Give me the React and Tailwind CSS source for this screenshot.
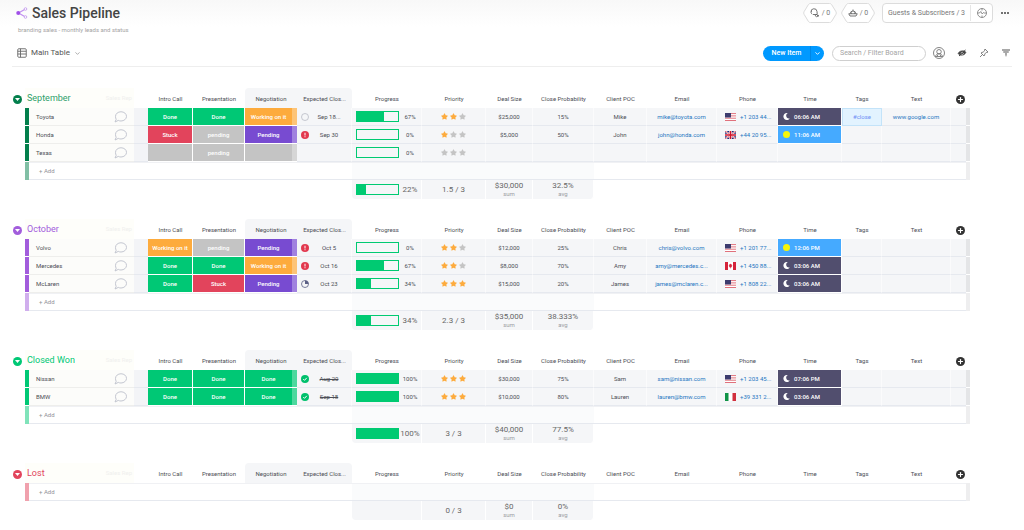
import { FaStar, FaMoon } from "react-icons/fa";
import { ChevronDown, Plus } from "lucide-react";

const statusColors = {
  Done: "bg-[#00c875]",
  Stuck: "bg-[#e2445c]",
  pending: "bg-[#c4c4c4]",
  "": "bg-[#c4c4c4]",
  "Working on it": "bg-[#fdab3d]",
  Pending: "bg-[#784bd1]",
};

const columns = [
  "Intro Call",
  "Presentation",
  "Negotiation",
  "Expected Clos...",
  "Progress",
  "Priority",
  "Deal Size",
  "Close Probability",
  "Client POC",
  "Email",
  "Phone",
  "Time",
  "Tags",
  "Text",
];

const groups = [
  {
    id: "september",
    title: "September",
    text: "text-[#2f9f6a]",
    bar: "bg-[#037f4c]",
    light: "bg-[#81bfa5]",
    items: [
      {
        name: "Toyota",
        stages: ["Done", "Done", "Working on it"],
        date: "Sep 18...",
        dateIcon: "empty",
        progress: 67,
        stars: 2,
        deal: "$25,000",
        probability: "15%",
        client: "Mike",
        email: "mike@toyota.com",
        flag: "us",
        phone: "+1 203 44...",
        time: "06:06 AM",
        tag: "#close",
        link: "www.google.com",
      },
      {
        name: "Honda",
        stages: ["Stuck", "pending", "Pending"],
        date: "Sep 30",
        dateIcon: "late",
        progress: 0,
        stars: 1,
        deal: "$5,000",
        probability: "50%",
        client: "John",
        email: "john@honda.com",
        flag: "uk",
        phone: "+44 20 95...",
        time: "11:06 AM",
        day: true,
      },
      { name: "Texas", stages: ["", "pending", ""], progress: 0, stars: 0 },
    ],
    summary: { progress: 22, priority: "1.5 / 3", deal: "$30,000", probability: "32.5%" },
  },
  {
    id: "october",
    title: "October",
    text: "text-[#a25ddc]",
    bar: "bg-[#a25ddc]",
    light: "bg-[#d0aeed]",
    items: [
      {
        name: "Volvo",
        stages: ["Working on it", "pending", "Pending"],
        date: "Oct 5",
        dateIcon: "late",
        progress: 0,
        stars: 2,
        deal: "$12,000",
        probability: "25%",
        client: "Chris",
        email: "chris@volvo.com",
        flag: "us",
        phone: "+1 201 77...",
        time: "12:06 PM",
        day: true,
      },
      {
        name: "Mercedes",
        stages: ["Done", "Done", "Working on it"],
        date: "Oct 16",
        dateIcon: "late",
        progress: 67,
        stars: 2,
        deal: "$8,000",
        probability: "70%",
        client: "Amy",
        email: "amy@mercedes.c...",
        flag: "ca",
        phone: "+1 450 88...",
        time: "03:06 AM",
      },
      {
        name: "McLaren",
        stages: ["Done", "Stuck", "Pending"],
        date: "Oct 23",
        dateIcon: "clock",
        progress: 34,
        stars: 3,
        deal: "$15,000",
        probability: "20%",
        client: "James",
        email: "james@mclaren.c...",
        flag: "us",
        phone: "+1 808 22...",
        time: "03:06 AM",
      },
    ],
    summary: { progress: 34, priority: "2.3 / 3", deal: "$35,000", probability: "38.333%" },
  },
  {
    id: "closed-won",
    title: "Closed Won",
    text: "text-[#00c875]",
    bar: "bg-[#00c875]",
    light: "bg-[#80e3ba]",
    items: [
      {
        name: "Nissan",
        stages: ["Done", "Done", "Done"],
        date: "Aug 20",
        dateIcon: "done",
        progress: 100,
        stars: 3,
        deal: "$30,000",
        probability: "75%",
        client: "Sam",
        email: "sam@nissan.com",
        flag: "us",
        phone: "+1 203 45...",
        time: "07:06 PM",
      },
      {
        name: "BMW",
        stages: ["Done", "Done", "Done"],
        date: "Sep 18",
        dateIcon: "done",
        progress: 100,
        stars: 3,
        deal: "$10,000",
        probability: "80%",
        client: "Lauren",
        email: "lauren@bmw.com",
        flag: "it",
        phone: "+39 331 2...",
        time: "03:06 AM",
      },
    ],
    summary: { progress: 100, priority: "3 / 3", deal: "$40,000", probability: "77.5%" },
  },
  {
    id: "lost",
    title: "Lost",
    text: "text-[#e2445c]",
    bar: "bg-[#e2445c]",
    light: "bg-[#f0a1ad]",
    items: [],
    summary: { progress: null, priority: "0 / 3", deal: "$0", probability: "0%" },
  },
];

function Flag({ country }) {
  return (
    <svg viewBox="0 0 22 16" className="h-2 w-[11px] shrink-0" aria-hidden="true">
      {country === "us" && (
        <>
          <rect width="22" height="16" fill="#fff" />
          <path d="M0 1.2h22M0 5.8h22M0 10.4h22M0 15h22" stroke="#e0717c" strokeWidth="2" />
          <rect width="12" height="9" fill="#3c3b6e" />
        </>
      )}
      {country === "uk" && (
        <>
          <rect width="22" height="16" fill="#1d2f7c" />
          <path d="M0 0l22 16M22 0L0 16" stroke="#fff" strokeWidth="3.6" />
          <path d="M0 0l22 16M22 0L0 16" stroke="#cf142b" strokeWidth="1.4" />
          <path d="M11 0v16M0 8h22" stroke="#fff" strokeWidth="5.4" />
          <path d="M11 0v16M0 8h22" stroke="#cf142b" strokeWidth="3.2" />
        </>
      )}
      {country === "ca" && (
        <>
          <rect width="22" height="16" fill="#fff" />
          <path d="M0 0h6v16H0zM16 0h6v16h-6z" fill="#d5233a" />
          <path d="M11 3l1.2 2 1.6-.6-.4 2.4 1.6.6-2.4 2.4.2 1.4-1.4-.2V13h-.8v-2l-1.4.2.2-1.4L7 7.400l1.600-.6-.4-2.400 1.600.6z" fill="#d5233a" />
        </>
      )}
      {country === "it" && (
        <>
          <rect width="22" height="16" fill="#fff" />
          <rect width="7" height="16" fill="#109347" />
          <rect x="15" width="7" height="16" fill="#d12f3d" />
        </>
      )}
    </svg>
  );
}

function DateIcon({ type }) {
  return (
    <svg viewBox="0 0 16 16" className="size-2 shrink-0" fill="none" aria-hidden="true">
      {type === "empty" && <circle cx="8" cy="8" r="7" stroke="#b8bbc4" strokeWidth="1.6" />}
      {type === "late" && (
        <>
          <circle cx="8" cy="8" r="8" fill="#e2384e" />
          <path d="M8 3.500v5.500M8 10.500v2" stroke="#fff" strokeWidth="2" />
        </>
      )}
      {type === "clock" && (
        <>
          <circle cx="8" cy="8" r="7" stroke="#5b5f85" strokeWidth="1.600" />
          <path d="M8 8V1a7 7 0 0 1 7 7z" fill="#5b5f85" />
        </>
      )}
      {type === "done" && (
        <>
          <circle cx="8" cy="8" r="8" fill="#00c06c" />
          <path d="M4.500 8.200l2.500 2.500 4.500-5" stroke="#fff" strokeWidth="2" />
        </>
      )}
    </svg>
  );
}

function Progress({ value, large }) {
  return (
    <div className="flex items-center pl-1">
      <div className="h-[11px] w-[43px] shrink-0 border border-[#00ca72] bg-[#f5f6f8]">
        <div className="h-full bg-[#00ca72]" style={{ width: `${value}%` }} />
      </div>
      <span className={large ? "flex-1 text-center text-[8px] text-[#676767]" : "flex-1 text-center"}>
        {value}%
      </span>
    </div>
  );
}

function Stars({ count }) {
  return (
    <div className="flex justify-center gap-[2px]" role="img" aria-label={`${count} of 3 stars`}>
      {[1, 2, 3].map((n) => (
        <FaStar key={n} className={n <= count ? "size-[7px] text-[#fdab3d]" : "size-[7px] text-[#c4c4c4]"} />
      ))}
    </div>
  );
}

function Bubble() {
  return (
    <svg viewBox="0 0 26 24" className="h-3 w-[13px]" fill="none" stroke="#c3c6d0" strokeWidth="2" aria-hidden="true">
      <path d="M14 1.500c6 0 11 4 11 9.200s-5 9.300-11 9.300c-2 0-3.800-.4-5.400-1.200L2 22l2.400-5.400C3.400 15 3 13 3 10.700 3 5.500 8 1.500 14 1.500z" />
    </svg>
  );
}

const cell = "border-r border-b border-r-[#fbfbfc] border-b-[#e6e9ef] bg-[#f5f6f8] p-0";

function ItemRow({ item, group }) {
  return (
    <tr className="h-[18px]">
      <td className={`border-b border-white p-0 ${group.bar}`} />
      <td className="border-b border-[#eeeeec] bg-[#fcfcfa] p-0">
        <div className="flex items-center justify-between pr-[7px] pl-[7px] text-left">
          <span>{item.name}</span>
          <button type="button" aria-label={`Comments on ${item.name}`}>
            <Bubble />
          </button>
        </div>
      </td>
      <td className="border-b border-[#e6e9ef] bg-[#f3f4f7] p-0" />
      {item.stages.map((stage, i) => (
        <td
          key={i}
          className={`border-b border-white p-0 font-medium text-white ${i < 2 ? "border-r" : ""} ${statusColors[stage]}`}
        >
          {i < 2 ? (
            stage
          ) : (
            <div className="flex h-[17px] items-center">
              <span className="flex-1">{stage}</span>
              <span className="h-full w-[5px] bg-white/30" />
            </div>
          )}
        </td>
      ))}
      <td className={cell}>
        {item.date && (
          <div className="flex items-center pr-[2px] pl-1">
            <DateIcon type={item.dateIcon} />
            <span className={item.dateIcon === "done" ? "flex-1 line-through" : "flex-1"}>{item.date}</span>
          </div>
        )}
      </td>
      <td className={cell}>
        <Progress value={item.progress} />
      </td>
      <td className={cell}>
        <Stars count={item.stars} />
      </td>
      <td className={cell}>{item.deal}</td>
      <td className={cell}>{item.probability}</td>
      <td className={cell}>{item.client}</td>
      <td className={cell}>
        {item.email && (
          <a href={`mailto:${item.email}`} className="text-[#1f76c2]">
            {item.email}
          </a>
        )}
      </td>
      <td className={cell}>
        {item.phone && (
          <div className="flex items-center gap-1 pl-2">
            <Flag country={item.flag} />
            <a href={`tel:${item.phone}`} className="text-[#1f76c2]">
              {item.phone}
            </a>
          </div>
        )}
      </td>
      {item.time ? (
        <td className={`border-r border-b border-white p-0 font-medium text-white ${item.day ? "bg-[#45aaff]" : "bg-[#514e6e]"}`}>
          <div className="flex items-center gap-1 pl-[5px]">
            {item.day ? (
              <span className="size-[7px] rounded-full bg-[#f5f50a]" />
            ) : (
              <FaMoon className="size-[7px]" />
            )}
            {item.time}
          </div>
        </td>
      ) : (
        <td className={cell} />
      )}
      {item.tag ? (
        <td className="border border-[#c3e3f9] bg-[#e2f3ff] p-0 text-[#6f8ff5]">{item.tag}</td>
      ) : (
        <td className={cell} />
      )}
      <td className={cell}>
        {item.link && (
          <a href={`https://${item.link}`} className="text-[#1f76c2]">
            {item.link}
          </a>
        )}
      </td>
      <td className="border-b border-[#e6e9ef] bg-[#f5f6f8] p-0" />
      <td className="border-b border-white bg-[#e4e5e7] p-0" />
    </tr>
  );
}

function Group({ group }) {
  const { summary } = group;
  const sumCell = "border-r border-white bg-[#f5f6f8] p-0";

  return (
    <section className="flex items-start" aria-labelledby={group.id}>
      <div className="flex h-5 w-3 shrink-0 items-center pt-[2px]">
        <button
          type="button"
          aria-label={`Collapse ${group.title}`}
          className={`flex size-[9px] items-center justify-center rounded-full ${group.bar}`}
        >
          <svg viewBox="0 0 10 6" className="h-[3px] w-[5px]" fill="#fff" aria-hidden="true">
            <path d="M0 0h10L5 6z" />
          </svg>
        </button>
      </div>
      <table className="w-full min-w-[945px] table-fixed border-separate border-spacing-0 text-center text-[6px] leading-[8px] whitespace-nowrap text-[#4c4e56]">
        <colgroup>
          <col className="w-[4px]" />
          <col className="w-[105px]" />
          <col className="w-[14px]" />
          <col className="w-[45px]" />
          <col className="w-[52px]" />
          <col className="w-[52px]" />
          <col className="w-[55px]" />
          <col className="w-[70px]" />
          <col className="w-[64px]" />
          <col className="w-[47px]" />
          <col className="w-[61px]" />
          <col className="w-[53px]" />
          <col className="w-[70px]" />
          <col className="w-[61px]" />
          <col className="w-[64px]" />
          <col className="w-[40px]" />
          <col className="w-[69px]" />
          <col className="w-[15px]" />
          <col className="w-[4px]" />
        </colgroup>
        <thead>
          <tr className="h-5">
            <th colSpan={2} className="bg-[#fefefa] p-0 font-normal">
              <div className="flex items-center justify-between">
                <h2 id={group.id} className={`pl-[2px] text-[9px] leading-[12px] ${group.text}`}>
                  {group.title}
                </h2>
                <span className="pr-[2px] text-[#f0f0ee]">Sales Rep</span>
              </div>
            </th>
            <th className="p-0" />
            {columns.map((label, i) => (
              <th
                key={label}
                className={`p-0 pt-[2px] font-normal ${i === 2 ? "rounded-tl bg-[#f5f6f8]" : ""} ${i === 3 ? "rounded-tr bg-[#f5f6f8]" : ""}`}
              >
                {label}
              </th>
            ))}
            <th colSpan={2} className="p-0 pt-[2px]">
              <button
                type="button"
                aria-label="Add column"
                className="mx-auto flex size-[9px] items-center justify-center rounded-full bg-[#333333] text-white"
              >
                <Plus className="size-[7px]" strokeWidth={4} />
              </button>
            </th>
          </tr>
        </thead>
        <tbody>
          {group.items.map((item) => (
            <ItemRow key={item.name} item={item} group={group} />
          ))}
          <tr className="h-[18px]">
            <td className={`p-0 ${group.light}`} />
            <td colSpan={6} className="border-y border-t-[#f0f1f4] border-b-[#e6e9ef] p-0 text-left">
              <button type="button" className="pl-[10px] text-[#909298]">
                + Add
              </button>
            </td>
            <td colSpan={4} className="border-y border-t-[#f0f1f4] border-b-[#e6e9ef] bg-[#fafbfc] p-0" />
            <td colSpan={7} className="border-y border-t-[#f0f1f4] border-b-[#e6e9ef] p-0" />
            <td className="bg-[#eeeeef] p-0" />
          </tr>
        </tbody>
        <tfoot>
          <tr className="h-[19px]">
            <td colSpan={7} className="p-0" />
            <td className={`rounded-bl ${sumCell}`}>
              {summary.progress !== null && <Progress value={summary.progress} large />}
            </td>
            <td className={`text-[8px] text-[#676767] ${sumCell}`}>{summary.priority}</td>
            <td className={sumCell}>
              <div className="text-[8px] text-[#676767]">{summary.deal}</div>
              <div className="leading-[7px] text-[#9a9ca3]">sum</div>
            </td>
            <td className={`rounded-br ${sumCell}`}>
              <div className="text-[8px] text-[#676767]">{summary.probability}</div>
              <div className="leading-[7px] text-[#9a9ca3]">avg</div>
            </td>
            <td colSpan={8} className="p-0" />
          </tr>
        </tfoot>
      </table>
    </section>
  );
}

function HexButton({ label, children }) {
  return (
    <button type="button" aria-label={label} className="grid h-5 w-[34px] place-items-center text-[7px] text-[#777777]">
      <svg viewBox="0 0 34 20" className="col-start-1 row-start-1 h-5 w-[34px]" fill="#fff" stroke="#dcdcdc" aria-hidden="true">
        <path d="M7.500.5h19q1.500 0 2.200 1.200L33 8.800q.6 1.200 0 2.400l-4.300 7.100q-.7 1.200-2.200 1.200h-19q-1.500 0-2.200-1.200L1 11.200q-.6-1.200 0-2.400l4.300-7.100Q6 .5 7.500.5z" />
      </svg>
      <span className="col-start-1 row-start-1 flex items-center gap-[2px]">
        {children}
        <span>/ 0</span>
      </span>
    </button>
  );
}

function Header() {
  return (
    <header className="bg-gradient-to-b from-[#f8f8f8] to-white to-40% px-3 pt-[3px]">
      <div className="flex h-5 items-center justify-between pr-[3px] pl-1">
        <div className="flex items-center gap-1">
          <svg viewBox="0 0 24 24" className="size-3" fill="none" aria-hidden="true">
            <path d="M19 4L5 12l14 8" stroke="#c08ff0" strokeWidth="2.400" />
            <circle cx="4.500" cy="12" r="4" fill="#a04fe8" />
            <circle cx="19" cy="4" r="2.600" fill="#fff" stroke="#c9a6ee" strokeWidth="2" />
            <circle cx="19" cy="20" r="2.600" fill="#fff" stroke="#c9a6ee" strokeWidth="2" />
          </svg>
          <h1 className="text-[14px] leading-[20px] font-medium text-[#444444]">Sales Pipeline</h1>
        </div>
        <div className="flex items-center">
          <HexButton label="Automations">
            <svg viewBox="0 0 20 20" className="size-[10px]" fill="none" stroke="#666666" strokeWidth="1.800" aria-hidden="true">
              <path d="M4.500 12.500C2.500 11 2 9.500 2 8a6 6 0 0 1 12-1l.5 6H6M2 5.500l2 1.500M12 12l5 5M13.500 18l4.500-4M10 14l3 4" />
            </svg>
          </HexButton>
          <div className="w-1" />
          <HexButton label="Integrations">
            <svg viewBox="0 0 20 20" className="size-[10px]" fill="none" stroke="#666666" strokeWidth="1.800" aria-hidden="true">
              <path d="M4.500 11.500a5.500 5.500 0 0 1 11 0M10 6V3M1.500 11.500h17L16 16H4zM7 11.500V9M13 11.500V9" />
            </svg>
          </HexButton>
          <div className="ml-[7px] flex h-5 items-center rounded-sm border border-[#dcdcdc] bg-white">
            <button type="button" className="w-[87px] text-center text-[7px] whitespace-nowrap text-[#777777]">
              Guests &amp; Subscribers / 3
            </button>
            <button type="button" aria-label="Activity log" className="flex h-4 w-[22px] items-center justify-center border-l border-[#e6e6e6]">
              <svg viewBox="0 0 20 20" className="size-[10px]" fill="none" stroke="#777777" strokeWidth="1.600" aria-hidden="true">
                <circle cx="10" cy="10" r="9" />
                <path d="M1 10h4l2.500-3 3 5L13 9l1.500 1H19M10 1v4M10 15v4" />
              </svg>
            </button>
          </div>
          <button type="button" aria-label="More options" className="ml-2 flex gap-px">
            <span className="size-[2px] rounded-full bg-[#444444]" />
            <span className="size-[2px] rounded-full bg-[#444444]" />
            <span className="size-[2px] rounded-full bg-[#444444]" />
          </button>
        </div>
      </div>
      <p className="mt-[3px] pl-[6px] text-[6px] leading-[8px] text-[#a4a4a4]">branding sales - monthly leads and status</p>
      <div className="mt-2 flex h-[25px] items-center justify-between border-b border-[#eeeeee] pb-[2px] pl-[5px]">
        <button type="button" className="flex items-center text-[8px] text-[#555555]">
          <svg viewBox="0 0 20 20" className="mr-1 size-[10px]" fill="none" stroke="#666666" strokeWidth="1.800" aria-hidden="true">
            <rect x="1.500" y="1.500" width="17" height="17" rx="2" />
            <path d="M1.500 6.500h17M1.500 12h17M7 1.500v17" />
          </svg>
          Main Table
          <ChevronDown className="ml-1 size-[7px] text-[#777777]" />
        </button>
        <div className="flex items-center">
          <div className="flex h-[15px] w-[61px] overflow-hidden rounded-full bg-[#0099ff] text-white">
            <button type="button" className="flex-1 text-[7px] font-medium">
              New Item
            </button>
            <button type="button" aria-label="More item types" className="flex w-[14px] items-center justify-center border-l border-[#0087e6]">
              <ChevronDown className="size-[7px]" strokeWidth={3} />
            </button>
          </div>
          <input
            type="text"
            aria-label="Search / Filter Board"
            placeholder="Search / Filter Board"
            className="ml-2 h-[15px] w-[94px] rounded-full border border-[#cfcfcf] px-[7px] text-[7px] placeholder:text-[#a4a4a4]"
          />
          <div className="ml-[7px] flex items-center gap-3 pr-px text-[#666666]">
            <button type="button" aria-label="Filter by person">
              <svg viewBox="0 0 24 24" className="size-3" fill="none" stroke="currentColor" strokeWidth="1.600" aria-hidden="true">
                <circle cx="12" cy="12" r="11" />
                <circle cx="12" cy="9.500" r="4.500" />
                <path d="M5 19c1-4 3.500-5.500 7-5.500s6 1.500 7 5.500zM9 18v-2M15 18v-2" />
              </svg>
            </button>
            <button type="button" aria-label="Hidden columns">
              <svg viewBox="0 0 20 20" className="size-[10px]" fill="none" stroke="#444444" aria-hidden="true">
                <path d="M2 11c2-4 5-5.500 9-5.500 3 0 5 .5 7 3-1.500 4-4.500 6-8.500 6-3.500 0-6-1-7.500-3.500z" fill="#444444" />
                <path d="M4 16L17 4" strokeWidth="2" />
                <path d="M8 11a2.500 2.500 0 0 1 4-2M9 13a3 3 0 0 0 4-3" stroke="#fff" strokeWidth="1.200" />
              </svg>
            </button>
            <button type="button" aria-label="Pin columns">
              <svg viewBox="0 0 20 20" className="size-[10px]" fill="none" stroke="currentColor" strokeWidth="1.600" aria-hidden="true">
                <path d="M12 2l6 6-2 1-1.500-.3-3 3.300c.3 2-.3 3-1.500 4l-6-6c1-1.200 2-1.800 4-1.500L11.300 5.500 11 4zM7 13l-5 5" />
              </svg>
            </button>
            <button type="button" aria-label="Filter">
              <svg viewBox="0 0 20 20" className="size-[10px]" stroke="#555555" strokeWidth="2.400" aria-hidden="true">
                <path d="M2 4h16M4.500 8h11M8 12h4M9 15.500h2" />
              </svg>
            </button>
          </div>
        </div>
      </div>
    </header>
  );
}

export default function App() {
  return (
    <div className="min-h-screen bg-white font-['Roboto',sans-serif]">
      <Header />
      <main className="flex flex-col gap-5 pt-[21px] pr-[54px] pb-2 pl-[13px]">
        {groups.map((group) => (
          <Group key={group.id} group={group} />
        ))}
      </main>
    </div>
  );
}
